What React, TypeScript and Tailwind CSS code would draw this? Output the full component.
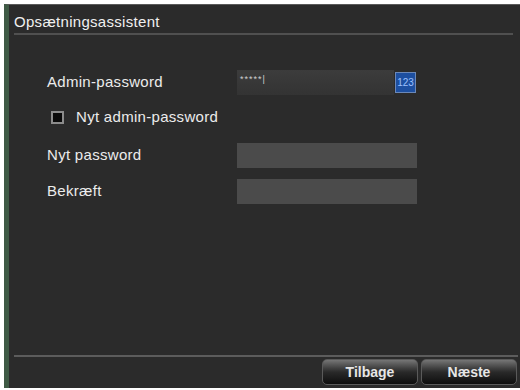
const Field = ({ label, children }: { label: string; children?: React.ReactNode }) => (
  <div className="flex items-center h-[25px]">
    <div className="w-[190px] text-[15px] tracking-[0.3px] text-[#ececec]">{label}</div>
    {children}
  </div>
);

const Button = ({ title }: { title: string }) => (
  <button className="w-[96px] h-[26px] rounded-[5px] border border-[#5a5a5a] bg-gradient-to-b from-[#767676] via-[#2a2a2a] to-[#0e0e0e] text-[14px] font-bold text-[#e6e6e6]">
    {title}
  </button>
);

export default function App() {
  return (
    <div
      className="w-[520px] h-[390px] bg-white pt-[4px] pl-[4px] pb-[2px]"
      style={{ fontFamily: '"Liberation Sans", Arial, sans-serif' }}
    >
      <div className="flex flex-col w-full h-full bg-[#2b2b2b] border-l-[5px] border-t border-[#3f5a45] border-t-[#5a5a5a]">
        <div className="flex flex-col px-[5px]">
          <div className="h-[28px] pt-[6px] text-[15px] tracking-[0.3px] text-[#f0f0f0]">Opsætningsassistent</div>
          <div className="h-[2px] bg-[#505050] mr-[2px]" />
        </div>

        <div className="flex flex-col flex-1 pl-[38px] pt-[35px]">
          <Field label="Admin-password">
            <div className="flex items-center">
              <div className="w-[157px] h-[25px] bg-gradient-to-b from-[#3c3c3c] to-[#333333] text-[#d0d0d0] text-[9px] pl-[3px] pt-[3px] tracking-[1px]">
                *****|
              </div>
              <div className="w-[21px] h-[21px] ml-[1px] border border-[#6b88b8] bg-[#1d4fa0] text-[10px] text-[#9cc0ff] flex items-center justify-center">
                123
              </div>
            </div>
          </Field>
          <div className="flex items-center h-[44px] pl-[4px]">
            <div className="w-[13px] h-[13px] border-2 border-[#8c8c8c] bg-[#0a0a0a] mr-[12px]" />
            <span className="text-[15px] tracking-[0.3px] text-[#ececec]">Nyt admin-password</span>
          </div>
          <div className="flex flex-col mt-[4px] gap-[11px]">
            <Field label="Nyt password">
              <div className="w-[180px] h-[25px] bg-[#4b4b4b]" />
            </Field>
            <Field label="Bekræft">
              <div className="w-[180px] h-[25px] bg-[#4b4b4b]" />
            </Field>
          </div>
        </div>

        <div className="h-[2px] bg-[#5c5c5c] ml-[5px] mr-[2px]" />
        <div className="flex justify-end gap-[3px] pr-[3px] pt-[2px] h-[31px]">
          <Button title="Tilbage" />
          <Button title="Næste" />
        </div>
      </div>
    </div>
  );
}
